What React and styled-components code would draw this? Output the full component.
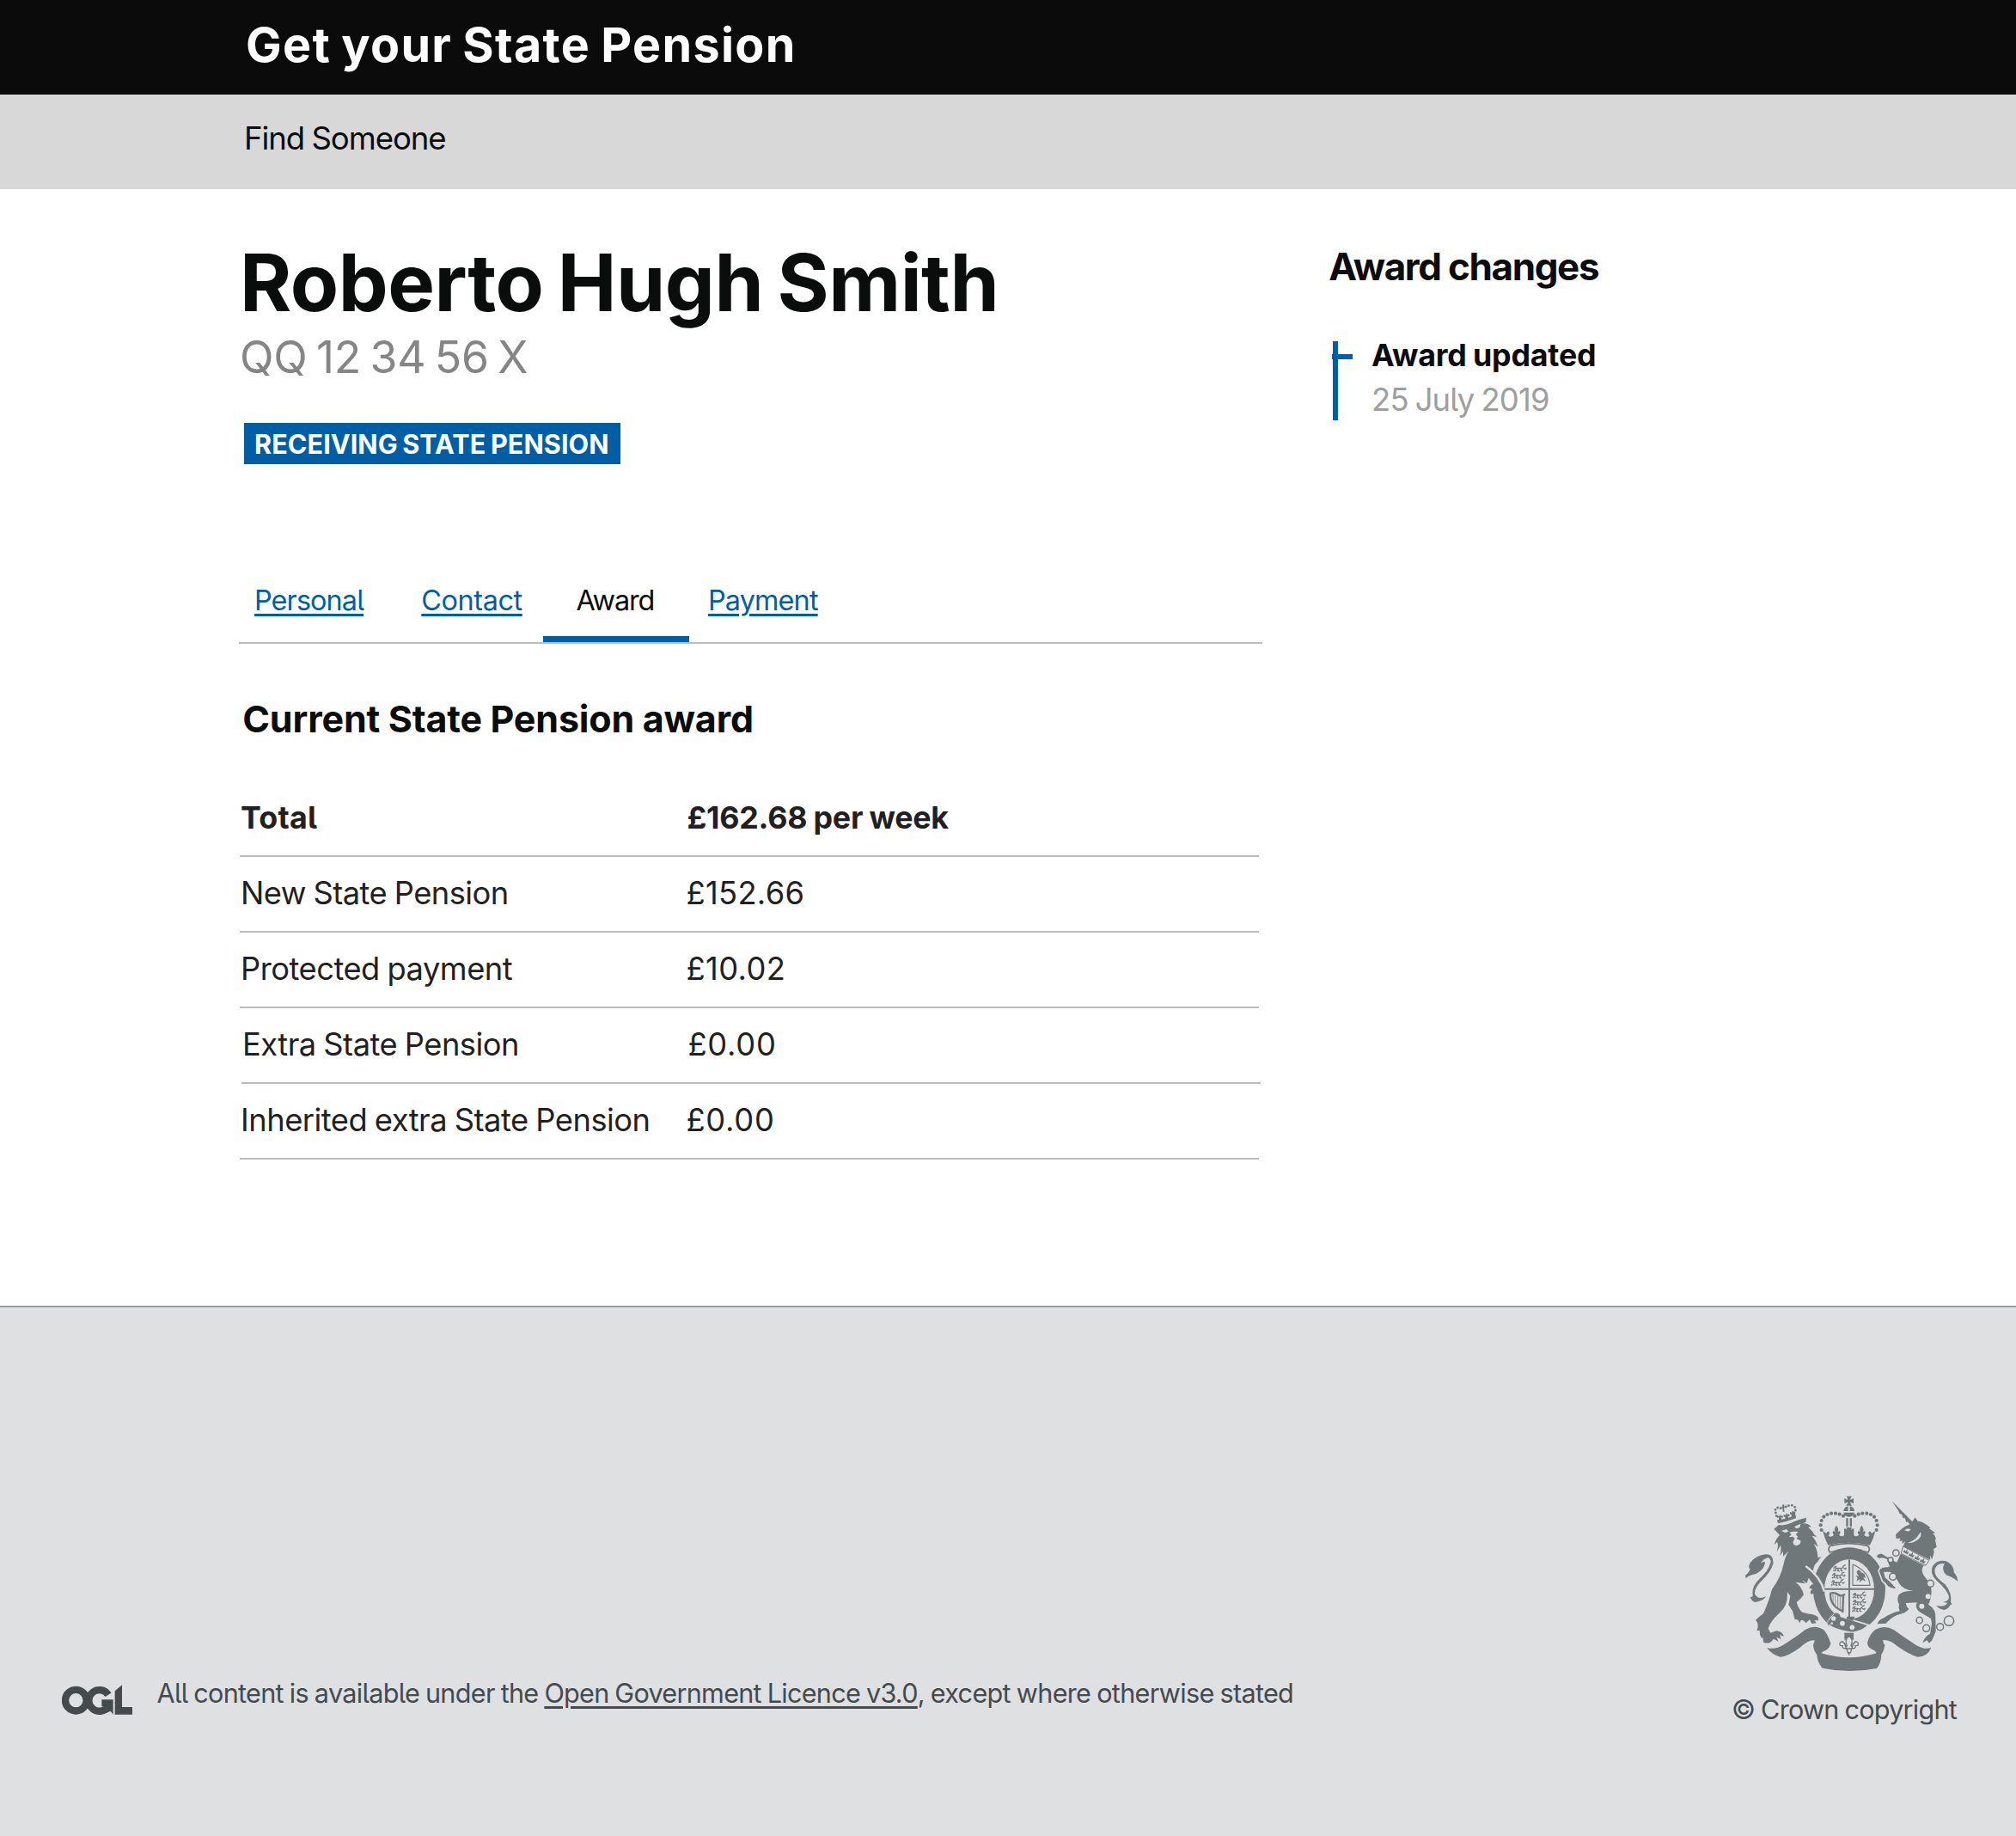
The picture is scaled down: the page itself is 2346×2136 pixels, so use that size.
import React from "react";
import styled, { createGlobalStyle, css } from "styled-components";

const BLUE = "#005ea5";
const FOOT = "#dee0e2";
const ARMS = "#6f777b";

const Global = createGlobalStyle`
  * { box-sizing: border-box; }
  body {
    margin: 0;
    background: #fff;
    color: #0b0c0c;
    font-family: Inter, "Open Sans", sans-serif;
    font-feature-settings: "cv05";
  }
  h1, h2, h3, p, dl, dt, dd { margin: 0; font: inherit; }
`;

const tracked = css`
  letter-spacing: ${(p) => p.$track || 0}px;
  white-space: pre;
`;

const Page = styled.div`
  width: 2346px;
  height: 2136px;
  display: flex;
  flex-direction: column;
`;

const Header = styled.header`
  height: 110px;
  padding-left: 286px;
  background: #0b0b0b;
  color: #fff;
  font-size: 55.6px;
  font-weight: 700;
  line-height: 104px;
  word-spacing: -2.5px;
  ${tracked}
`;

const SubNav = styled.nav`
  height: 110px;
  padding-left: 284px;
  background: #d8d8d8;
  font-size: 36.6px;
  line-height: 103px;
  word-spacing: -1px;
  ${tracked}
`;

const Main = styled.main`
  height: 1299px;
  display: flex;
  padding: 54px 0 0 278px;
`;

const Content = styled.section`
  width: 1191px;
`;

const Name = styled.h1`
  && { font-size: 92px; font-weight: 700; line-height: 110px; }
  word-spacing: -5px;
  padding-left: 1px;
  ${tracked}
`;

const Nino = styled.p`
  && { font-size: 51.7px; line-height: 62px; }
  padding-left: 1px;
  color: #858585;
  word-spacing: -3.5px;
  ${tracked}
`;

const Status = styled.div`
  width: 438px;
  height: 48px;
  margin: 46px 0 0 6px;
  padding-left: 12px;
  background: ${BLUE};
  color: #fff;
  font-size: 30.6px;
  font-weight: 700;
  line-height: 50px;
  word-spacing: -1.8px;
  ${tracked}
`;

const Tabs = styled.nav`
  display: flex;
  margin-top: 130px;
  border-bottom: 2px solid #bbbcbd;
`;

const Tab = styled.div`
  width: ${(p) => p.$width}px;
  height: 77px;
  padding-left: ${(p) => p.$inset}px;
  border-bottom: 7px solid ${(p) => (p.$active ? BLUE : "transparent")};
  color: ${(p) => (p.$active ? "#0b0c0c" : BLUE)};
  font-size: 32.4px;
  line-height: 57px;
  ${tracked}
`;

const TabLink = styled.span`
  text-decoration: underline;
  text-decoration-thickness: 3px;
  text-underline-offset: 4px;
`;

const SectionTitle = styled.h2`
  && { font-size: ${(p) => p.$size}px; font-weight: 700; line-height: 53px; }
  height: 52px;
  margin-top: ${(p) => p.$top}px;
  padding-left: ${(p) => p.$inset}px;
  word-spacing: -0.5px;
  ${tracked}
`;

const AwardList = styled.dl`
  margin: 47px 0 0 1px;
  width: 1186px;
`;

const Row = styled.div`
  display: grid;
  grid-template-columns: 519.5px 1fr;
  height: 88px;
  margin: 0 ${(p) => (p.$shift ? -2 : 0)}px 0 ${(p) => (p.$shift ? 2 : 0)}px;
  border-bottom: 2px solid #bbbcbd;
  color: #231f20;
  font-size: ${(p) => (p.$bold ? 35.8 : 36.3)}px;
  font-weight: ${(p) => (p.$bold ? 700 : 400)};
  line-height: 84px;
  word-spacing: -1px;
`;

const Term = styled.dt`
  padding-left: 1px;
  ${tracked}
`;

const Amount = styled.dd`
  padding-left: ${(p) => p.$nudge || 0}px;
  ${tracked}
`;

const Aside = styled.aside`
  margin-left: 77px;
`;

const Event = styled.div`
  display: flex;
  height: 92px;
  margin-top: 61px;
  padding-left: 4px;
`;

const EventMark = styled.svg`
  width: 24px;
  height: 92px;
  margin-right: 22px;
`;

const EventTitle = styled.h3`
  && { font-size: 35.8px; font-weight: 700; line-height: 32px; }
  word-spacing: -1px;
  ${tracked}
`;

const EventDate = styled.p`
  && { font-size: 36.4px; line-height: 50px; }
  margin-top: 11px;
  color: #9e9e9e;
  word-spacing: -1.5px;
  ${tracked}
`;

const Footer = styled.footer`
  flex: 1;
  display: flex;
  justify-content: space-between;
  align-items: flex-start;
  padding: 219px 67px 0 72px;
  border-top: 2px solid #9a9da0;
  background: ${FOOT};
  color: #454a4d;
  font-size: 30.6px;
  line-height: 40px;
  word-spacing: -1px;
`;

const Licence = styled.div`
  display: flex;
  margin-top: 210px;
`;

const OglLogo = styled.svg`
  width: 82px;
  height: 35px;
  margin: 10px 28.5px 0 0;
`;

const Phrase = styled.span`
  ${tracked}
`;

const LicenceLink = styled(Phrase)`
  text-decoration: underline;
  text-decoration-thickness: 3px;
  text-underline-offset: 4px;
`;

const Crown = styled.div`
  width: 264px;
  display: flex;
  flex-direction: column;
`;

const ArmsSvg = styled.svg`
  width: 248px;
  height: 205px;
  align-self: flex-end;
  margin-bottom: 24px;
`;

const ROWS = [
  { label: "Total", value: "£162.68 per week", lt: 0.2, vt: -0.25, bold: true },
  { label: "New State Pension", value: "£152.66", lt: -0.56, vt: 0.3 },
  { label: "Protected payment", value: "£10.02", lt: -0.5, vt: 0.4 },
  { label: "Extra State Pension", value: "£0.00", lt: -0.52, vt: 0.7, shift: true },
  { label: "Inherited extra State Pension", value: "£0.00", lt: -0.51, vt: 0.7 },
];

const ARCH = [[331, 148], [328, 131], [331, 115], [339, 102], [351, 94], [365, 90], [380, 90], [394, 93], [407, 99]];
const mirror = (x) => 854 - x;

function Lion({ x, y }) {
  return (
    <path
      transform={`translate(${x} ${y})`}
      d="M0 6 L7 3 L10 7 L20 6 L28 8 L34 3 L36 -2 L43 -5 M10 7 L6 12 L11 16 M18 8 L16 15 L22 17 M28 8 L27 14 L33 17 M36 6 L42 9 L46 5 M4 0 L12 1 M0 13 L4 17"
      fill="none"
      stroke={ARMS}
      strokeWidth="4"
    />
  );
}

function RoyalArms() {
  return (
    <ArmsSvg viewBox="65 28 744 615" fill={ARMS} aria-label="Royal coat of arms">
      {/* imperial crown */}
      <path d="M418 30H437L431 40Q431 42 434 42L443 37V56L434 51Q431 51 431 53L437 63H417L423 53Q423 51 420 51L411 56V37L420 42Q423 42 423 40Z" />
      <path d="M408 82A19 19 0 0 1 424 65V82ZM430 65A19 19 0 0 1 446 82H430ZM408 87H446A19 15 0 0 1 408 87Z" />
      <path d="M417 107H424V136H417ZM430 107H437V136H430Z" />
      {ARCH.map(([x, y]) => (
        <g key={`${x}-${y}`}>
          <circle cx={x} cy={y} r="6.3" />
          <circle cx={mirror(x)} cy={y} r="6.3" />
        </g>
      ))}
      <path d="M335 151L348 160Q350 152 357 153Q362 160 355 168Q365 176 374 165Q366 157 373 151L379 155Q372 145 383 132Q394 145 387 155L393 151Q401 157 392 165Q402 174 411 166L414 142L421 149L417 139H437L433 149L440 142L443 166Q452 174 462 165Q453 157 461 151L467 155Q460 145 471 132Q482 145 475 155L481 151Q488 157 480 165Q489 176 499 168Q492 160 497 153Q504 152 506 160L519 151Q512 180 500 201Q427 184 354 201Q343 180 335 151Z" />
      <path d="M410 142L423 152Q421 157 411 168H443Q433 157 431 152L444 142V172H410Z" />
      <path d="M362 203Q427 187 492 203Q503 213 494 226Q427 206 360 226Q351 213 362 203Z" fill={FOOT} stroke={ARMS} strokeWidth="5" />

      {/* garter */}
      <ellipse cx="428" cy="356" rx="126" ry="147" />
      <ellipse cx="428" cy="355" rx="87" ry="105" fill={FOOT} />
      <path d="M425 251H431V462H425ZM341 351H515V357H341Z" />
      <Lion x="372" y="275" />
      <Lion x="368" y="300" />
      <Lion x="365" y="325" />
      <Lion x="440" y="369" />
      <Lion x="440" y="393" />
      <Lion x="438" y="416" />
      <path d="M440 268V341H500Q497 293 440 268" fill="none" stroke={ARMS} strokeWidth="3.5" />
      <path d="M454 292L462 287L469 295L481 302L485 316L476 313L486 327L474 322L463 332L466 319L453 327L457 315L450 307L462 309L455 300Z" />
      <path d="M362 369Q360 412 402 430M361 369Q377 364 388 373Q400 382 413 372M407 376L405 436" fill="none" stroke={ARMS} strokeWidth="7" />
      <path d="M371 373V408M379 375V417M388 378V423M396 380V427" fill="none" stroke={ARMS} strokeWidth="2.2" />

      {/* buckle and strap */}
      <path d="M350 474Q358 452 374 441Q390 429 397 449L496 480Q468 505 438 506Q395 501 366 486Z" stroke={FOOT} strokeWidth="5" />
      <path d="M357 482Q346 466 361 451Q372 436 385 439Q396 441 396 452" fill="none" stroke={ARMS} strokeWidth="3" />
      <circle cx="373" cy="457" r="8" fill={FOOT} />
      <circle cx="367" cy="474" r="4" fill={FOOT} />
      <circle cx="404" cy="474" r="8.5" fill={FOOT} />
      <circle cx="438" cy="488" r="8.5" fill={FOOT} />
      <path d="M420 450H447L441 465L418 458Z" />
      <path d="M411 507H443V531H411Z" />
      <path d="M427 517Q410 532 420 552L416 557Q414 544 404 537Q391 540 396 551L405 552Q402 563 418 561L422 574Q427 586 433 574L437 561Q452 563 449 552L458 551Q463 540 450 537Q440 544 438 557L434 552Q444 532 427 517ZM420 562H435M427 573V585" fill={FOOT} stroke={ARMS} strokeWidth="4" />

      {/* motto ribbon */}
      <path d="M140 558Q164 568 196 550Q250 516 274 496Q309 476 339 497Q354 514 363 544Q360 560 347 567Q335 570 330 578Q428 608 523 578Q520 569 507 564Q492 558 491 540Q498 514 518 496Q551 477 584 497Q612 518 660 549Q692 568 714 558Q701 591 666 591Q638 583 595 553Q570 530 546 532Q545 543 552 549Q549 570 540 582Q539 614 524 631Q428 650 334 630Q316 610 315 584Q302 566 302 548Q307 540 307 533Q285 530 254 560Q211 591 187 591Q158 583 140 558Z" />

      {/* lion supporter */}
      <path d="M179 125L176 113Q205 111 241 96L242 107Q208 120 179 125Z" />
      <path d="M182 116V104L176 106V98L183 100L186 94L190 99L196 97V105L190 104L193 114ZM203 112L205 102L199 103V94L206 96L209 88L213 95L219 91V100L214 100L216 108ZM226 104V93L221 93V85L227 87L231 80L234 85L240 82L239 99Z" />
      {[[171, 88], [170, 77], [178, 70], [188, 72], [207, 67], [216, 63], [228, 62], [238, 68], [240, 79], [174, 99]].map(([x, y]) => (
        <circle key={`l${x}${y}`} cx={x} cy={y} r="4.2" />
      ))}
      <path d="M194 60L202 59L200 65L206 68L200 71L202 84H196L195 72L189 70L194 66Z" />
      <path d="M165 144L182 130Q203 135 235 119Q255 110 278 105L276 121L265 125Q285 124 295 137L284 138Q300 151 305 163L315 172L298 168Q312 184 319 207L304 195Q318 219 318 245L330 242Q321 251 318 259Q304 267 302 290L334 345L341 378L325 384Q319 378 327 370L317 374L306 386Q300 373 310 366L295 373Q288 361 299 355L288 350Q294 337 303 338L286 315L280 333L262 322L275 335L240 330Q262 345 269 374Q258 391 244 400Q251 426 264 435L288 441Q302 440 319 452L320 464L306 463L313 473L297 475L290 461L276 473Q270 461 260 462L254 473Q250 457 238 461L230 431L216 409L222 378L211 363Q216 410 185 437Q150 470 145 492L153 507L174 500Q195 502 200 520L185 513L190 529L174 522L181 537L163 528Q152 548 129 541L126 524Q116 528 115 498L105 500Q115 477 101 462Q109 455 116 449L128 440Q148 395 158 355Q188 315 198 270Q203 242 216 222L197 240V222L186 238Q192 218 188 202L175 224Q182 200 176 190L166 200Q171 179 185 166Z" />
      <path d="M191 151L209 145L216 154L203 157ZM236 137L258 126L255 139L244 143ZM219 156L234 153L250 154L241 163L249 171L243 178L258 185Q260 200 243 203Q231 201 232 188L238 177L230 171L217 173L226 164Z" fill={FOOT} />
      <path d="M276 274Q327 310 341 363" fill="none" stroke={FOOT} strokeWidth="7" />
      <path d="M99 400Q133 394 137 380Q108 394 98 370Q96 350 123 324Q155 294 162 266Q165 232 136 233Q104 236 84 260Q72 277 82 285Q73 303 66 304V317Q80 304 102 301Q133 286 134 260Q126 257 119 264Q127 249 145 244Q158 252 152 266Q143 293 115 318Q87 345 91 372Q94 383 82 382Q88 398 99 400Z" />

      {/* unicorn supporter */}
      <path d="M576 46L653 124L640 130L632 119L627 121L622 106L616 107L611 93L604 91L598 78Z" />
      <path d="M590 164L611 144L622 136L642 127L658 104L667 117Q684 116 711 140L707 143L728 158L720 160Q734 175 728 184L733 207L722 215L724 226L717 250L710 237L711 252L616 206L623 188L612 196L613 184L602 187L607 177L592 178Z" />
      <path d="M620 149Q631 140 643 146L635 153ZM677 155Q682 171 667 182Q649 196 633 192Q654 186 665 172Z" fill={FOOT} />
      <path d="M616 205L707 254L694 272L609 230Z" fill={FOOT} stroke={ARMS} strokeWidth="3" />
      {[[627, 223], [646, 234], [666, 245], [685, 255]].map(([x, y]) => (
        <path key={`c${x}`} transform={`translate(${x} ${y}) rotate(25)`} d="M-9 7L-8 -3L-3 1L0 -11L4 1L9 -3L8 7Z" />
      ))}
      <path d="M607 231L688 272Q673 292 695 316Q714 335 715 365Q712 395 704 408Q733 425 729 459L730 502L717 533L707 543L699 533L684 542Q691 519 710 510L716 476L713 457L677 436Q655 423 664 401L625 403Q627 417 636 424Q625 439 596 444Q574 453 556 474L526 476Q530 461 549 455Q572 438 604 431Q598 420 602 407Q592 391 601 374Q616 359 651 361Q615 356 602 334L593 319Q586 298 568 294L548 294L553 314L572 331L591 352Q571 351 561 342L533 300Q531 290 543 280L569 276L560 250Q544 242 533 247L523 241Q528 230 541 231L574 251L594 261Z" />
      <path d="M526 248L538 276L530 291L543 326L561 345" fill="none" stroke={FOOT} strokeWidth="5" />
      <path d="M807 327Q804 305 794 297Q792 267 766 257Q737 249 719 274Q708 300 731 323Q765 352 775 377Q782 396 754 400L771 402Q761 418 732 412Q740 424 760 427Q775 423 780 410Q792 405 782 402Q788 368 762 337Q720 309 727 283Q737 260 761 266Q747 283 766 305Q785 311 807 327Z" />
      {[[591, 228, 11], [572, 252, 9], [580, 311, 12], [711, 335, 12], [673, 463, 11], [697, 491, 12], [745, 486, 12], [776, 465, 17]].map(([x, y, r]) => (
        <ellipse key={`e${x}`} cx={x} cy={y} rx={r} ry={r} fill={FOOT} stroke={ARMS} strokeWidth="4.5" />
      ))}
      <circle cx="703" cy="380" r="9" fill={FOOT} />
      <circle cx="681" cy="414" r="9" fill={FOOT} />
    </ArmsSvg>
  );
}

export default function App() {
  return (
    <Page>
      <Global />
      <Header $track={1.33}>Get your State Pension</Header>
      <SubNav $track={-1.07}>Find Someone</SubNav>
      <Main>
        <Content>
          <Name $track={-0.5}>Roberto Hugh Smith</Name>
          <Nino $track={-0.35}>QQ 12 34 56 X</Nino>
          <Status $track={0.06}>RECEIVING STATE PENSION</Status>
          <Tabs>
            <Tab $width={192} $inset={18} $track={-0.9}><TabLink>Personal</TabLink></Tab>
            <Tab $width={162} $inset={20.3} $track={-0.4}><TabLink>Contact</TabLink></Tab>
            <Tab $width={170} $inset={38.5} $track={-1.1} $active>Award</Tab>
            <Tab $width={170} $inset={22} $track={-0.85}><TabLink>Payment</TabLink></Tab>
          </Tabs>
          <SectionTitle $size={43} $top={61} $inset={4.2} $track={-0.15}>Current State Pension award</SectionTitle>
          <AwardList>
            {ROWS.map((r) => (
              <Row key={r.label} $bold={r.bold} $shift={r.shift}>
                <Term $track={r.lt}>{r.label}</Term>
                <Amount $track={r.vt} $nudge={r.bold ? 1 : 0}>{r.value}</Amount>
              </Row>
            ))}
          </AwardList>
        </Content>
        <Aside>
          <SectionTitle $size={44} $top={10} $inset={0.3} $track={-1.4}>Award changes</SectionTitle>
          <Event>
            <EventMark viewBox="0 0 24 92" fill={BLUE}>
              <rect x="1" width="6" height="92" />
              <rect y="15" width="24" height="6" />
            </EventMark>
            <div>
              <EventTitle $track={-0.2}>Award updated</EventTitle>
              <EventDate $track={-0.8}>25 July 2019</EventDate>
            </div>
          </Event>
        </Aside>
      </Main>
      <Footer>
        <Licence>
          <OglLogo viewBox="36 46 246 105" fill="#454a4d" aria-label="OGL">
            <circle cx="85" cy="100.5" r="37" fill="none" stroke="#454a4d" strokeWidth="25" />
            <path d="M198 81A37 37 0 1 0 199 120" fill="none" stroke="#454a4d" strokeWidth="25" />
            <path d="M175 98H215V150L206 138L188 146V121H175Z" />
            <path d="M221 68L246 47V124H282V150H221Z" />
          </OglLogo>
          <div>
            <Phrase $track={-0.7}>{"All content is available under the "}</Phrase>
            <LicenceLink $track={-0.73}>Open Government Licence v3.0</LicenceLink>
            <Phrase $track={-0.68}>, except where otherwise stated</Phrase>
          </div>
        </Licence>
        <Crown>
          <RoyalArms />
          <Phrase $track={-0.75}>© Crown copyright</Phrase>
        </Crown>
      </Footer>
    </Page>
  );
}
